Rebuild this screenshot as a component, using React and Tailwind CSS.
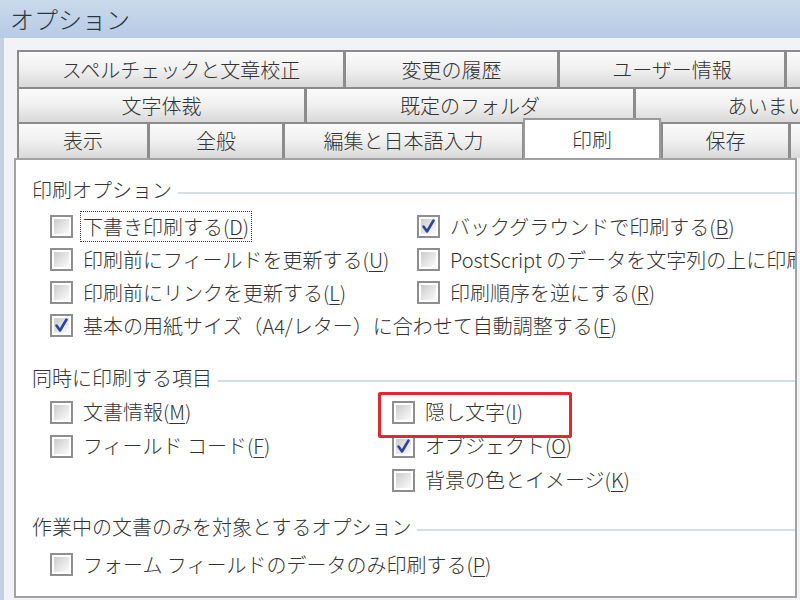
import React from 'react';

function Checkbox({ checked }) {
  return (
    <div className="w-[23px] h-[23px] shrink-0 border-2 border-[#8e8e8e] bg-white p-[2px]">
      <div className="w-full h-full bg-linear-to-br from-[#cbcbcb] via-[#e4e4e4] to-[#fbfbfb] flex items-center justify-center">
        {checked && (
          <svg width="15" height="15" viewBox="0 0 15 15" className="overflow-visible">
            <path d="M2.5 7.5 L6 12.5 L12.5 1.5" fill="none" stroke="#2a479c" strokeWidth="2.6" strokeLinecap="round" strokeLinejoin="round" />
          </svg>
        )}
      </div>
    </div>
  );
}

function Option({ checked, focus, children }) {
  return (
    <div className="flex items-center gap-[7px] h-full">
      <Checkbox checked={checked} />
      <span className={`px-[2px] h-[31px] flex items-center border border-dotted whitespace-nowrap ${focus ? 'border-[#3a3a3a]' : 'border-transparent'}`}>
        {children}
      </span>
    </div>
  );
}

const Key = ({ k }) => (
  <>(<span className="underline underline-offset-[3px] decoration-1">{k}</span>)</>
);

function GroupLabel({ children }) {
  return (
    <div className="flex items-center gap-[6px] h-[28px] pl-[16px]">
      <span className="whitespace-nowrap">{children}</span>
      <div className="flex-1 h-[2px] bg-[#d5dde6] mt-[6px]" />
    </div>
  );
}

function Tab({ className = '', children }) {
  return (
    <div className={`shrink-0 h-full flex items-center justify-center whitespace-nowrap border-t-2 border-l-2 border-r border-[#8c8c8c] bg-linear-to-b from-[#fbfbfb] via-[#f0f0f0] to-[#d9d9d9] ${className}`}>
      {children}
    </div>
  );
}

export default function App() {
  return (
    <div className="w-[800px] h-[600px] overflow-hidden flex flex-col bg-[#f1f3f6] text-[20px] font-light text-[#333333] font-['Noto_Sans_CJK_JP',sans-serif] leading-[28px]">
      {/* title bar */}
      <div className="h-[38px] shrink-0 flex items-center pl-[10px] bg-linear-to-b from-[#cadaec] to-[#b6cbe5] text-[24px] text-[#2b3642]">
        オプション
      </div>

      <div className="flex-1 flex flex-col border-l-[4px] border-[#c3d2e3] pt-[12px] min-h-0">
        {/* tab rows */}
        <div className="flex flex-col pl-[13px] overflow-hidden shrink-0">
          <div className="flex h-[37px]">
            <Tab className="w-[327px]">スペルチェックと文章校正</Tab>
            <Tab className="w-[214px]">変更の履歴</Tab>
            <Tab className="w-[227px]">ユーザー情報</Tab>
            <Tab className="w-[200px]" />
          </div>
          <div className="flex h-[35px]">
            <Tab className="w-[288px]">文字体裁</Tab>
            <Tab className="w-[329px]">既定のフォルダ</Tab>
            <Tab className="w-[306px]">あいまい検索</Tab>
          </div>
          <div className="flex h-[36px] items-end">
            <Tab className="w-[131px]">表示</Tab>
            <Tab className="w-[135px]">全般</Tab>
            <Tab className="w-[240px]">編集と日本語入力</Tab>
            <div className="relative z-10 shrink-0 w-[138px] h-[42px] mb-[-2px] flex items-center justify-center bg-white border-t-2 border-x-2 border-[#9a9a9a]">
              印刷
            </div>
            <Tab className="w-[128px]">保存</Tab>
            <Tab className="w-[100px]" />
          </div>
        </div>

        {/* panel */}
        <div className="flex-1 ml-[10px] mr-[3px] mb-[2px] border-2 border-[#a2a2a2] bg-white overflow-hidden flex flex-col">
          <div className="pt-[16px]">
            <GroupLabel>印刷オプション</GroupLabel>
          </div>
          <div className="mt-[6px] pl-[34px] grid grid-cols-[367px_1fr] auto-rows-[33px]">
            <Option focus>下書き印刷する<Key k="D" /></Option>
            <Option checked>バックグラウンドで印刷する<Key k="B" /></Option>
            <Option>印刷前にフィールドを更新する<Key k="U" /></Option>
            <Option>PostScript のデータを文字列の上に印刷する<Key k="S" /></Option>
            <Option>印刷前にリンクを更新する<Key k="L" /></Option>
            <Option>印刷順序を逆にする<Key k="R" /></Option>
            <div className="col-span-2">
              <Option checked>基本の用紙サイズ（A4/レター）に合わせて自動調整する<Key k="E" /></Option>
            </div>
          </div>

          <div className="mt-[22px]">
            <GroupLabel>同時に印刷する項目</GroupLabel>
          </div>
          <div className="mt-[3px] pl-[34px] grid grid-cols-[342px_1fr] auto-rows-[34px]">
            <Option>文書情報<Key k="M" /></Option>
            <div className="relative">
              <div className="absolute -left-[14px] -top-[3px] w-[194px] h-[46px] border-[3px] border-[#e5262e] rounded-[2px] z-10 pointer-events-none" />
              <Option>隠し文字<Key k="I" /></Option>
            </div>
            <Option>フィールド コード<Key k="F" /></Option>
            <Option checked>オブジェクト<Key k="O" /></Option>
            <div />
            <Option>背景の色とイメージ<Key k="K" /></Option>
          </div>

          <div className="mt-[16px]">
            <GroupLabel>作業中の文書のみを対象とするオプション</GroupLabel>
          </div>
          <div className="mt-[7px] pl-[34px] h-[33px]">
            <Option>フォーム フィールドのデータのみ印刷する<Key k="P" /></Option>
          </div>
        </div>
      </div>
    </div>
  );
}
